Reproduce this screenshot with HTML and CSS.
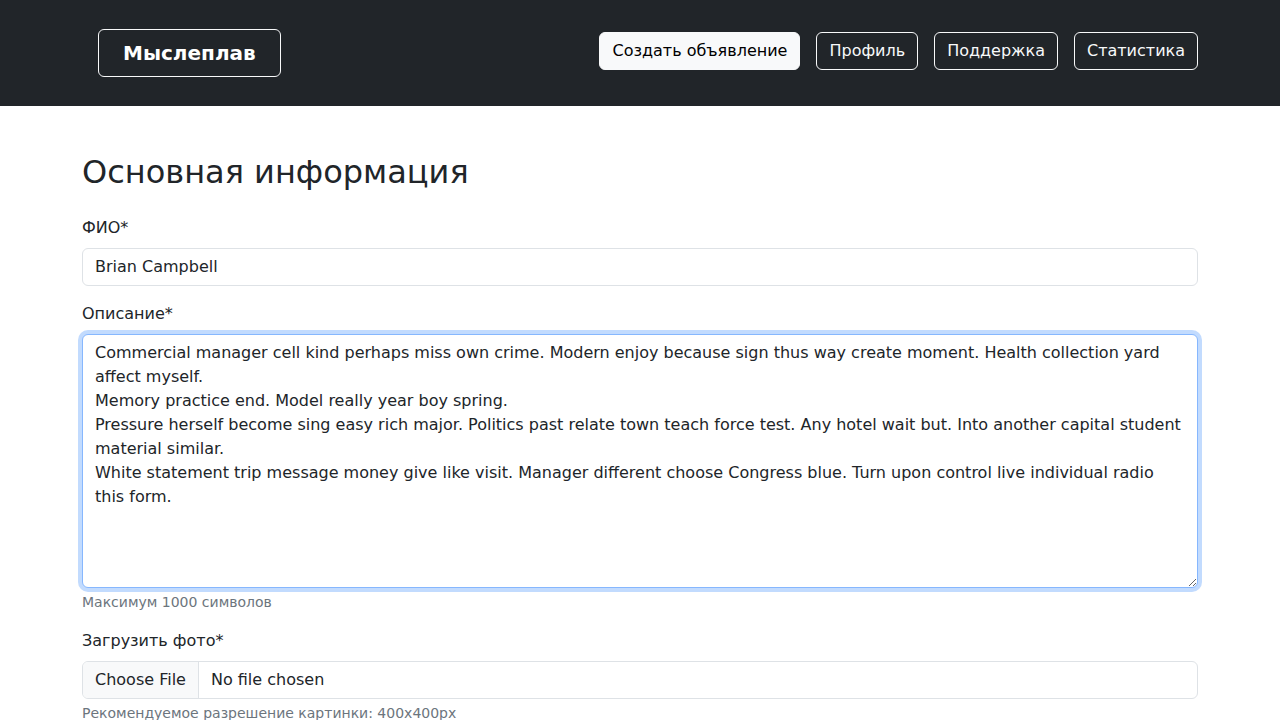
FILE: index.html
```html
<!DOCTYPE html>
<html lang="ru">
<head>
<meta charset="utf-8">
<title>Мыслеплав</title>
<link rel="stylesheet" href="styles.css">
</head>
<body>
<header class="navbar">
  <div class="container navbar-inner">
    <a class="brand" href="#">Мыслеплав</a>
    <nav class="nav-buttons">
      <a class="btn btn-light" href="#">Создать объявление</a>
      <a class="btn btn-outline" href="#">Профиль</a>
      <a class="btn btn-outline" href="#">Поддержка</a>
      <a class="btn btn-outline" href="#">Статистика</a>
    </nav>
  </div>
</header>
<main class="container main">
  <h2 class="title">Основная информация</h2>
  <form class="form">
    <div class="group">
      <label class="label" for="fio">ФИО*</label>
      <input class="control" id="fio" type="text" value="Brian Campbell">
    </div>
    <div class="group">
      <label class="label" for="desc">Описание*</label>
      <textarea class="control textarea focused" id="desc" rows="10">Commercial manager cell kind perhaps miss own crime. Modern enjoy because sign thus way create moment. Health collection yard affect myself.
Memory practice end. Model really year boy spring.
Pressure herself become sing easy rich major. Politics past relate town teach force test. Any hotel wait but. Into another capital student material similar.
White statement trip message money give like visit. Manager different choose Congress blue. Turn upon control live individual radio this form.</textarea>
      <div class="help">Максимум 1000 символов</div>
    </div>
    <div class="group">
      <label class="label" for="photo">Загрузить фото*</label>
      <input class="control file" id="photo" type="file">
      <div class="help">Рекомендуемое разрешение картинки: 400x400px</div>
    </div>
  </form>
</main>
</body>
</html>
```
FILE: styles.css
```css
* { box-sizing: border-box; }
html, body { margin: 0; padding: 0; }
body {
  font-family: "DejaVu Sans", sans-serif;
  font-size: 16px;
  line-height: 1.5;
  color: #212529;
  background: #fff;
}
.container {
  width: 1140px;
  margin: 0 auto;
  padding: 0 12px;
}
.navbar {
  background: #212529;
  height: 106px;
}
.navbar-inner {
  display: flex;
  justify-content: space-between;
  align-items: flex-start;
  padding-top: 29px;
}
.brand {
  margin-left: 16px;
  display: block;
  height: 48px;
  line-height: 46px;
  padding: 0 24px;
  border: 1px solid #f8f9fa;
  border-radius: 6px;
  color: #fff;
  font-weight: bold;
  font-size: 20px;
  text-decoration: none;
}
.nav-buttons {
  display: flex;
  gap: 16px;
  margin-top: 3px;
}
.btn {
  display: inline-block;
  height: 38px;
  padding: 6px 12px;
  font-size: 16px;
  line-height: 24px;
  border: 1px solid #f8f9fa;
  border-radius: 6px;
  text-decoration: none;
}
.btn-light {
  background: #f8f9fa;
  color: #000;
}
.btn-outline {
  background: transparent;
  color: #f8f9fa;
}
.main {
  padding-top: 47px;
}
.title {
  margin: 0 0 8px;
  font-size: 32px;
  font-weight: 400;
  line-height: 1.2;
}
.form {
  padding-top: 17px;
}
.group {
  margin-bottom: 16px;
}
.label {
  display: block;
  margin-bottom: 8px;
}
.control {
  display: block;
  width: 100%;
  padding: 6px 12px;
  font-family: "DejaVu Sans", sans-serif;
  font-size: 16px;
  line-height: 24px;
  color: #212529;
  background: #fff;
  border: 1px solid #dee2e6;
  border-radius: 6px;
  outline: none;
  margin: 0;
}
.textarea {
  resize: vertical;
  height: 254px;
}
.focused {
  border-color: #86b7fe;
  box-shadow: 0 0 0 4px rgba(13, 110, 253, 0.25);
}
.file {
  height: 38px;
  overflow: hidden;
  padding: 5px 12px 7px;
}
.file::file-selector-button {
  margin: -5px 12px -7px -12px;
  padding: 5px 12px 7px;
  height: 38px;
  font-family: "DejaVu Sans", sans-serif;
  font-size: 16px;
  line-height: 24px;
  color: #212529;
  background: #f8f9fa;
  border: 0;
  border-right: 1px solid #dee2e6;
  border-radius: 0;
}
.help {
  margin-top: 4px;
  font-size: 14px;
  line-height: 21px;
  color: #6c757d;
}
```
